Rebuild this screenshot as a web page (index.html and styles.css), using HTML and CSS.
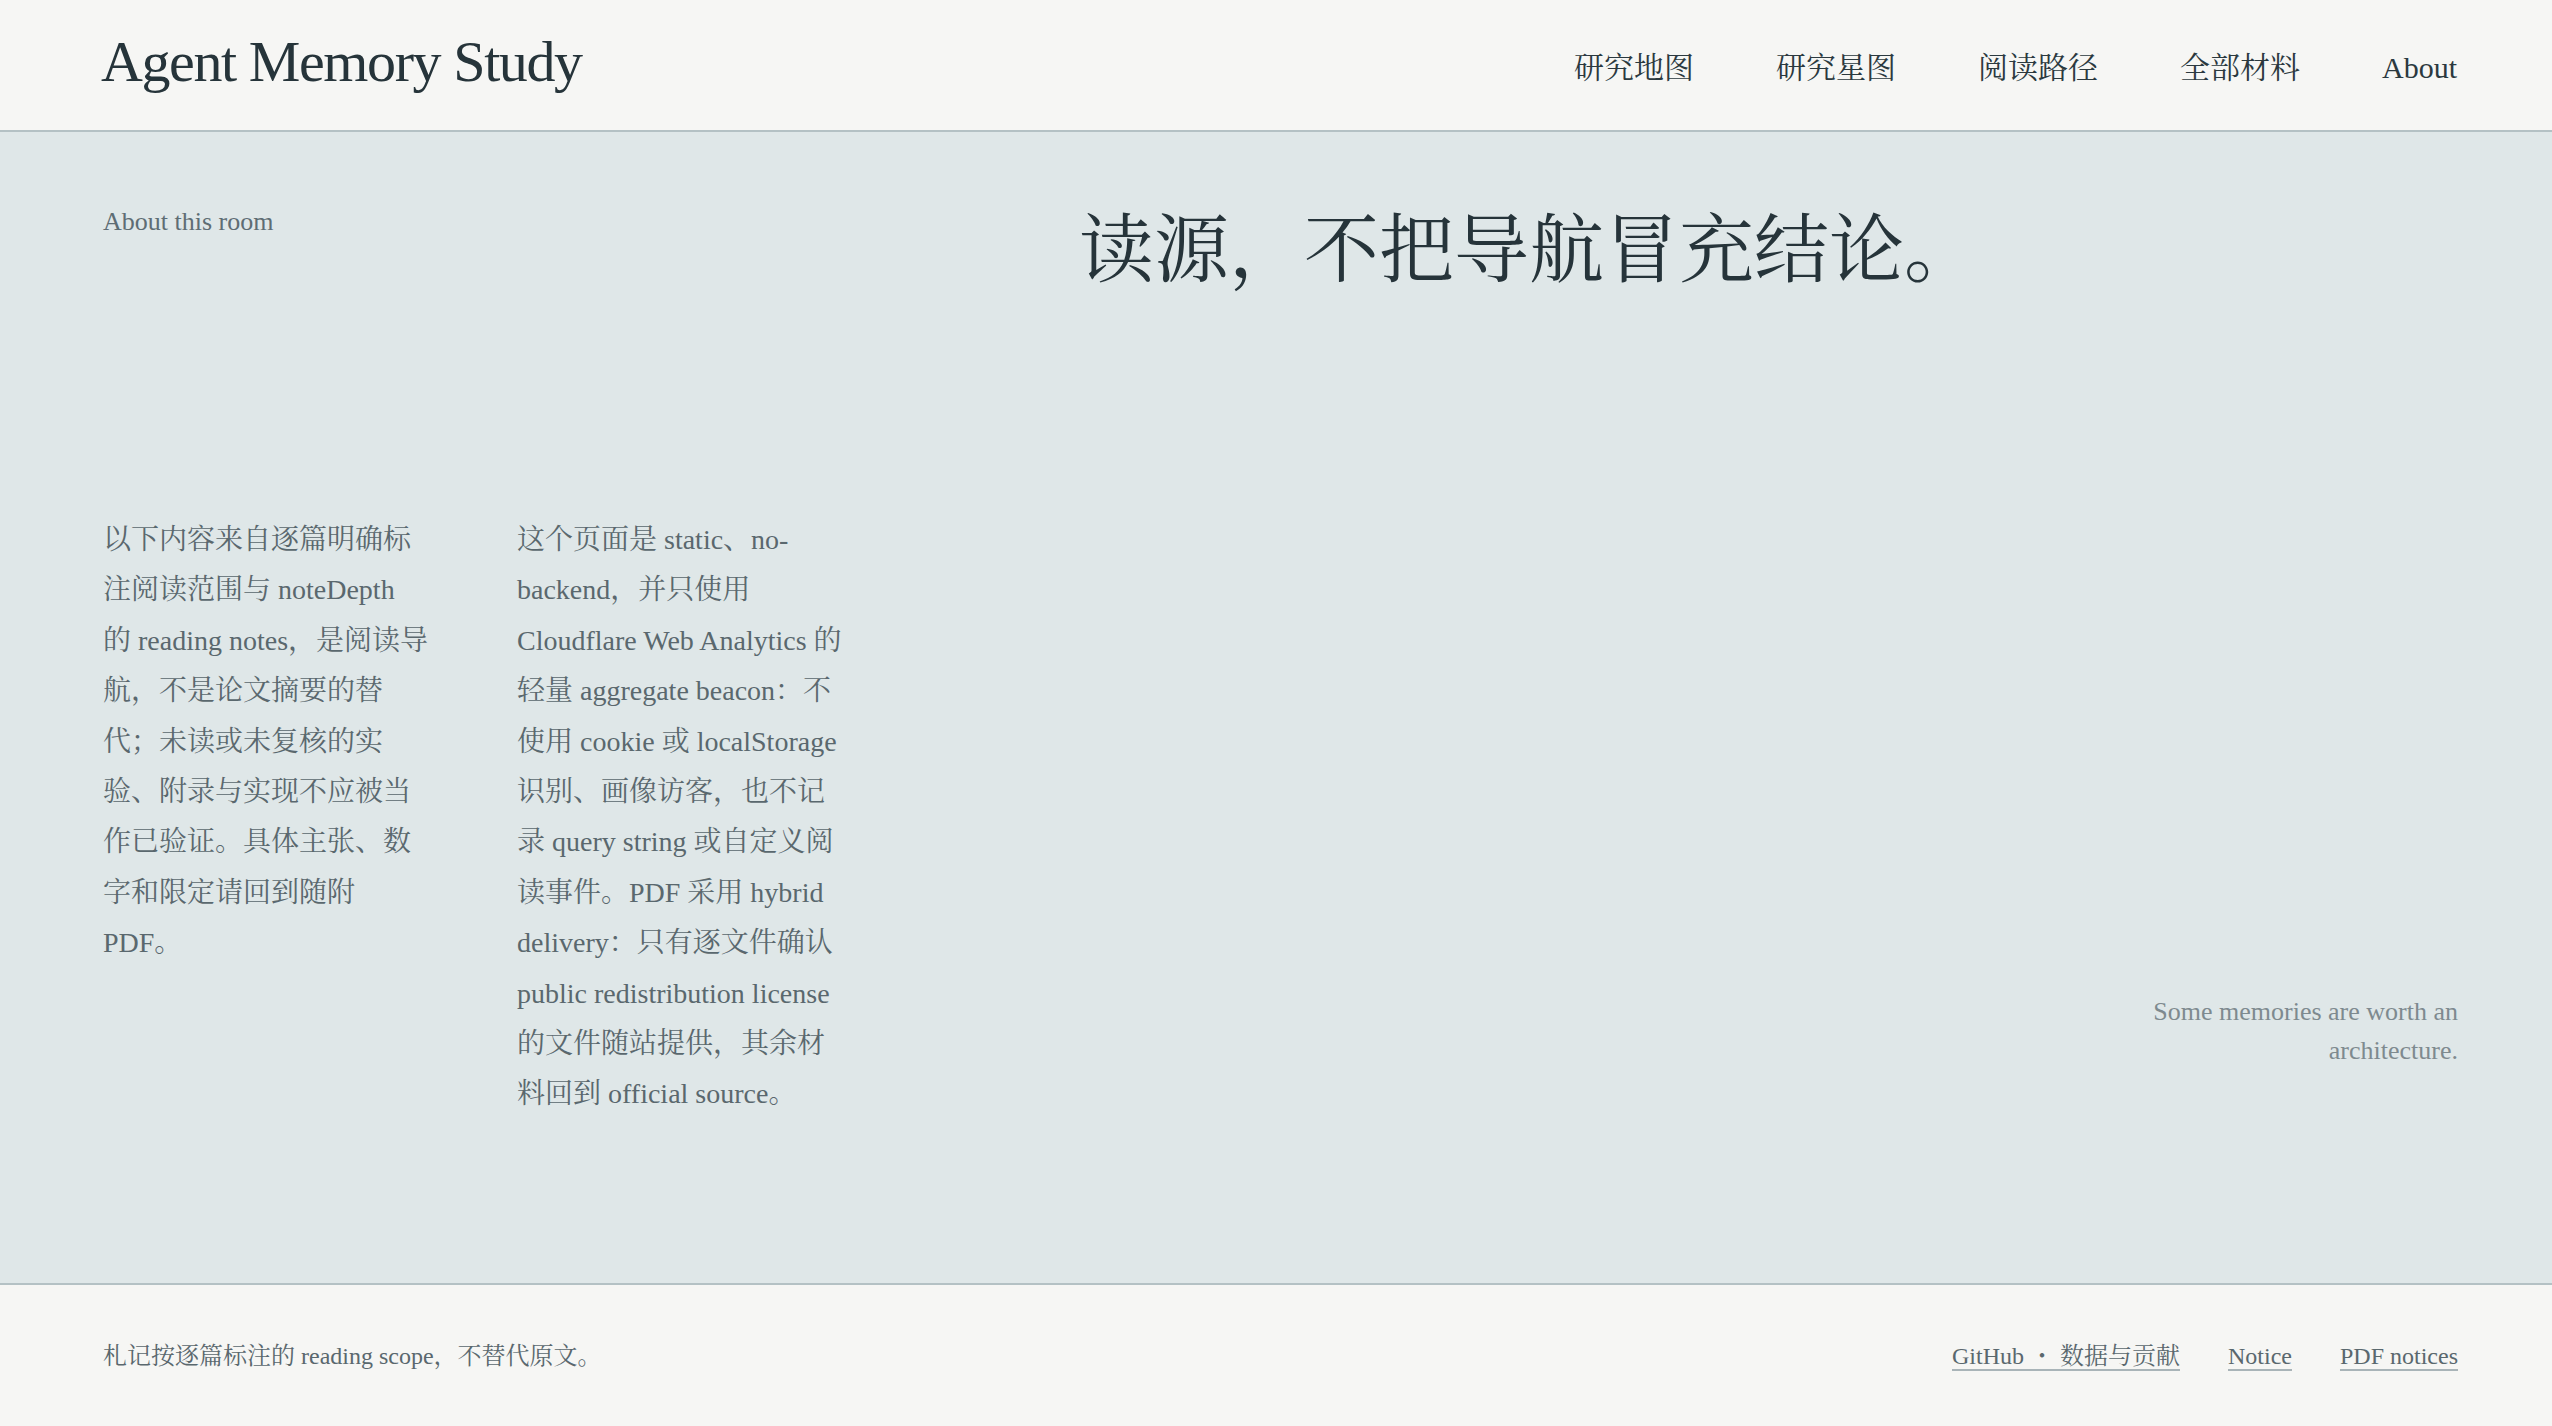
FILE: index.html
```html
<!DOCTYPE html>
<html lang="zh-CN">
<head>
<meta charset="utf-8">
<title>Agent Memory Study · About</title>
<link rel="stylesheet" href="styles.css">
</head>
<body>
  <header class="site-header">
    <a class="brand" href="#">Agent Memory Study</a>
    <nav class="main-nav">
      <a href="#">研究地图</a>
      <a href="#">研究星图</a>
      <a href="#">阅读路径</a>
      <a href="#">全部材料</a>
      <a href="#">About</a>
    </nav>
  </header>

  <main class="room">
    <section class="room-intro">
      <p class="eyebrow">About this room</p>
      <div class="notes">
        <p>以下内容来自逐篇明确标注阅读范围与 noteDepth 的 reading notes，是阅读导航，不是论文摘要的替代；未读或未复核的实验、附录与实现不应被当作已验证。具体主张、数字和限定请回到随附 PDF。</p>
        <p>这个页面是 static、no-backend，并只使用 Cloudflare Web Analytics 的轻量 aggregate beacon：不使用 cookie 或 localStorage 识别、画像访客，也不记录 query string 或自定义阅读事件。PDF 采用 hybrid delivery：只有逐文件确认 public redistribution license 的文件随站提供，其余材料回到 official source。</p>
      </div>
    </section>

    <section class="room-statement">
      <h1>读源，不把导航冒充结论。</h1>
      <p class="tagline">Some memories are worth an<br>architecture.</p>
    </section>
  </main>

  <footer class="site-footer">
    <p class="footnote">札记按逐篇标注的 reading scope，不替代原文。</p>
    <nav class="footer-links">
      <a href="#">GitHub ・ 数据与贡献</a>
      <a href="#">Notice</a>
      <a href="#">PDF notices</a>
    </nav>
  </footer>
</body>
</html>
```

FILE: styles.css
```css
:root {
  --paper: #f6f6f4;
  --room: #dfe7e8;
  --rule: #b4c1c4;
  --ink: #26343a;
  --ink-soft: #5a686e;
  --ink-faint: #7e8a8f;
  --serif: "Liberation Serif", "Noto Serif CJK SC", "Noto Sans CJK SC", serif;
}

* {
  box-sizing: border-box;
}

html,
body {
  margin: 0;
  height: 100%;
}

body {
  display: flex;
  flex-direction: column;
  min-height: 100vh;
  background: var(--paper);
  color: var(--ink);
  font-family: var(--serif);
}

a {
  color: inherit;
  text-decoration: none;
}

p {
  margin: 0;
}

/* ---------- header ---------- */

.site-header {
  display: flex;
  align-items: center;
  justify-content: space-between;
  height: 132px;
  padding: 0 95px 0 101px;
  border-bottom: 2px solid var(--rule);
  background: var(--paper);
}

.brand {
  padding-bottom: 7px;
  font-size: 58px;
  line-height: 1;
  letter-spacing: -1.4px;
  color: var(--ink);
}

.main-nav {
  display: flex;
  gap: 82px;
  padding-top: 6px;
  font-size: 30px;
  line-height: 1.2;
  color: #2b393f;
}

/* ---------- main room ---------- */

.room {
  flex: 1;
  display: grid;
  grid-template-columns: 746px 1fr;
  column-gap: 230px;
  padding: 70px 94px 160px 103px;
  background: var(--room);
}

.eyebrow {
  font-size: 26px;
  line-height: 39px;
  color: #5e6d74;
}

.notes {
  display: grid;
  grid-template-columns: 326px 330px;
  column-gap: 88px;
  margin-top: 274px;
  font-size: 28px;
  line-height: 1.8;
  color: var(--ink-soft);
}

.room-statement {
  display: flex;
  flex-direction: column;
}

.room-statement h1 {
  margin: 4px 0 0;
  font-size: 75px;
  font-weight: 400;
  line-height: 1.2;
  color: var(--ink);
}

.tagline {
  margin-top: auto;
  margin-bottom: 53px;
  text-align: right;
  font-size: 26px;
  line-height: 39px;
  color: var(--ink-faint);
}

/* ---------- footer ---------- */

.site-footer {
  display: flex;
  align-items: center;
  justify-content: space-between;
  height: 143px;
  padding: 0 94px 0 103px;
  border-top: 2px solid var(--rule);
  background: var(--paper);
  font-size: 24px;
  line-height: 1.5;
  color: var(--ink-soft);
}

.footer-links {
  display: flex;
  align-items: baseline;
  gap: 48px;
}

.footer-links a {
  text-decoration: underline;
  text-decoration-thickness: 2px;
  text-decoration-color: #a9b4b8;
  text-underline-offset: 5px;
}
```
